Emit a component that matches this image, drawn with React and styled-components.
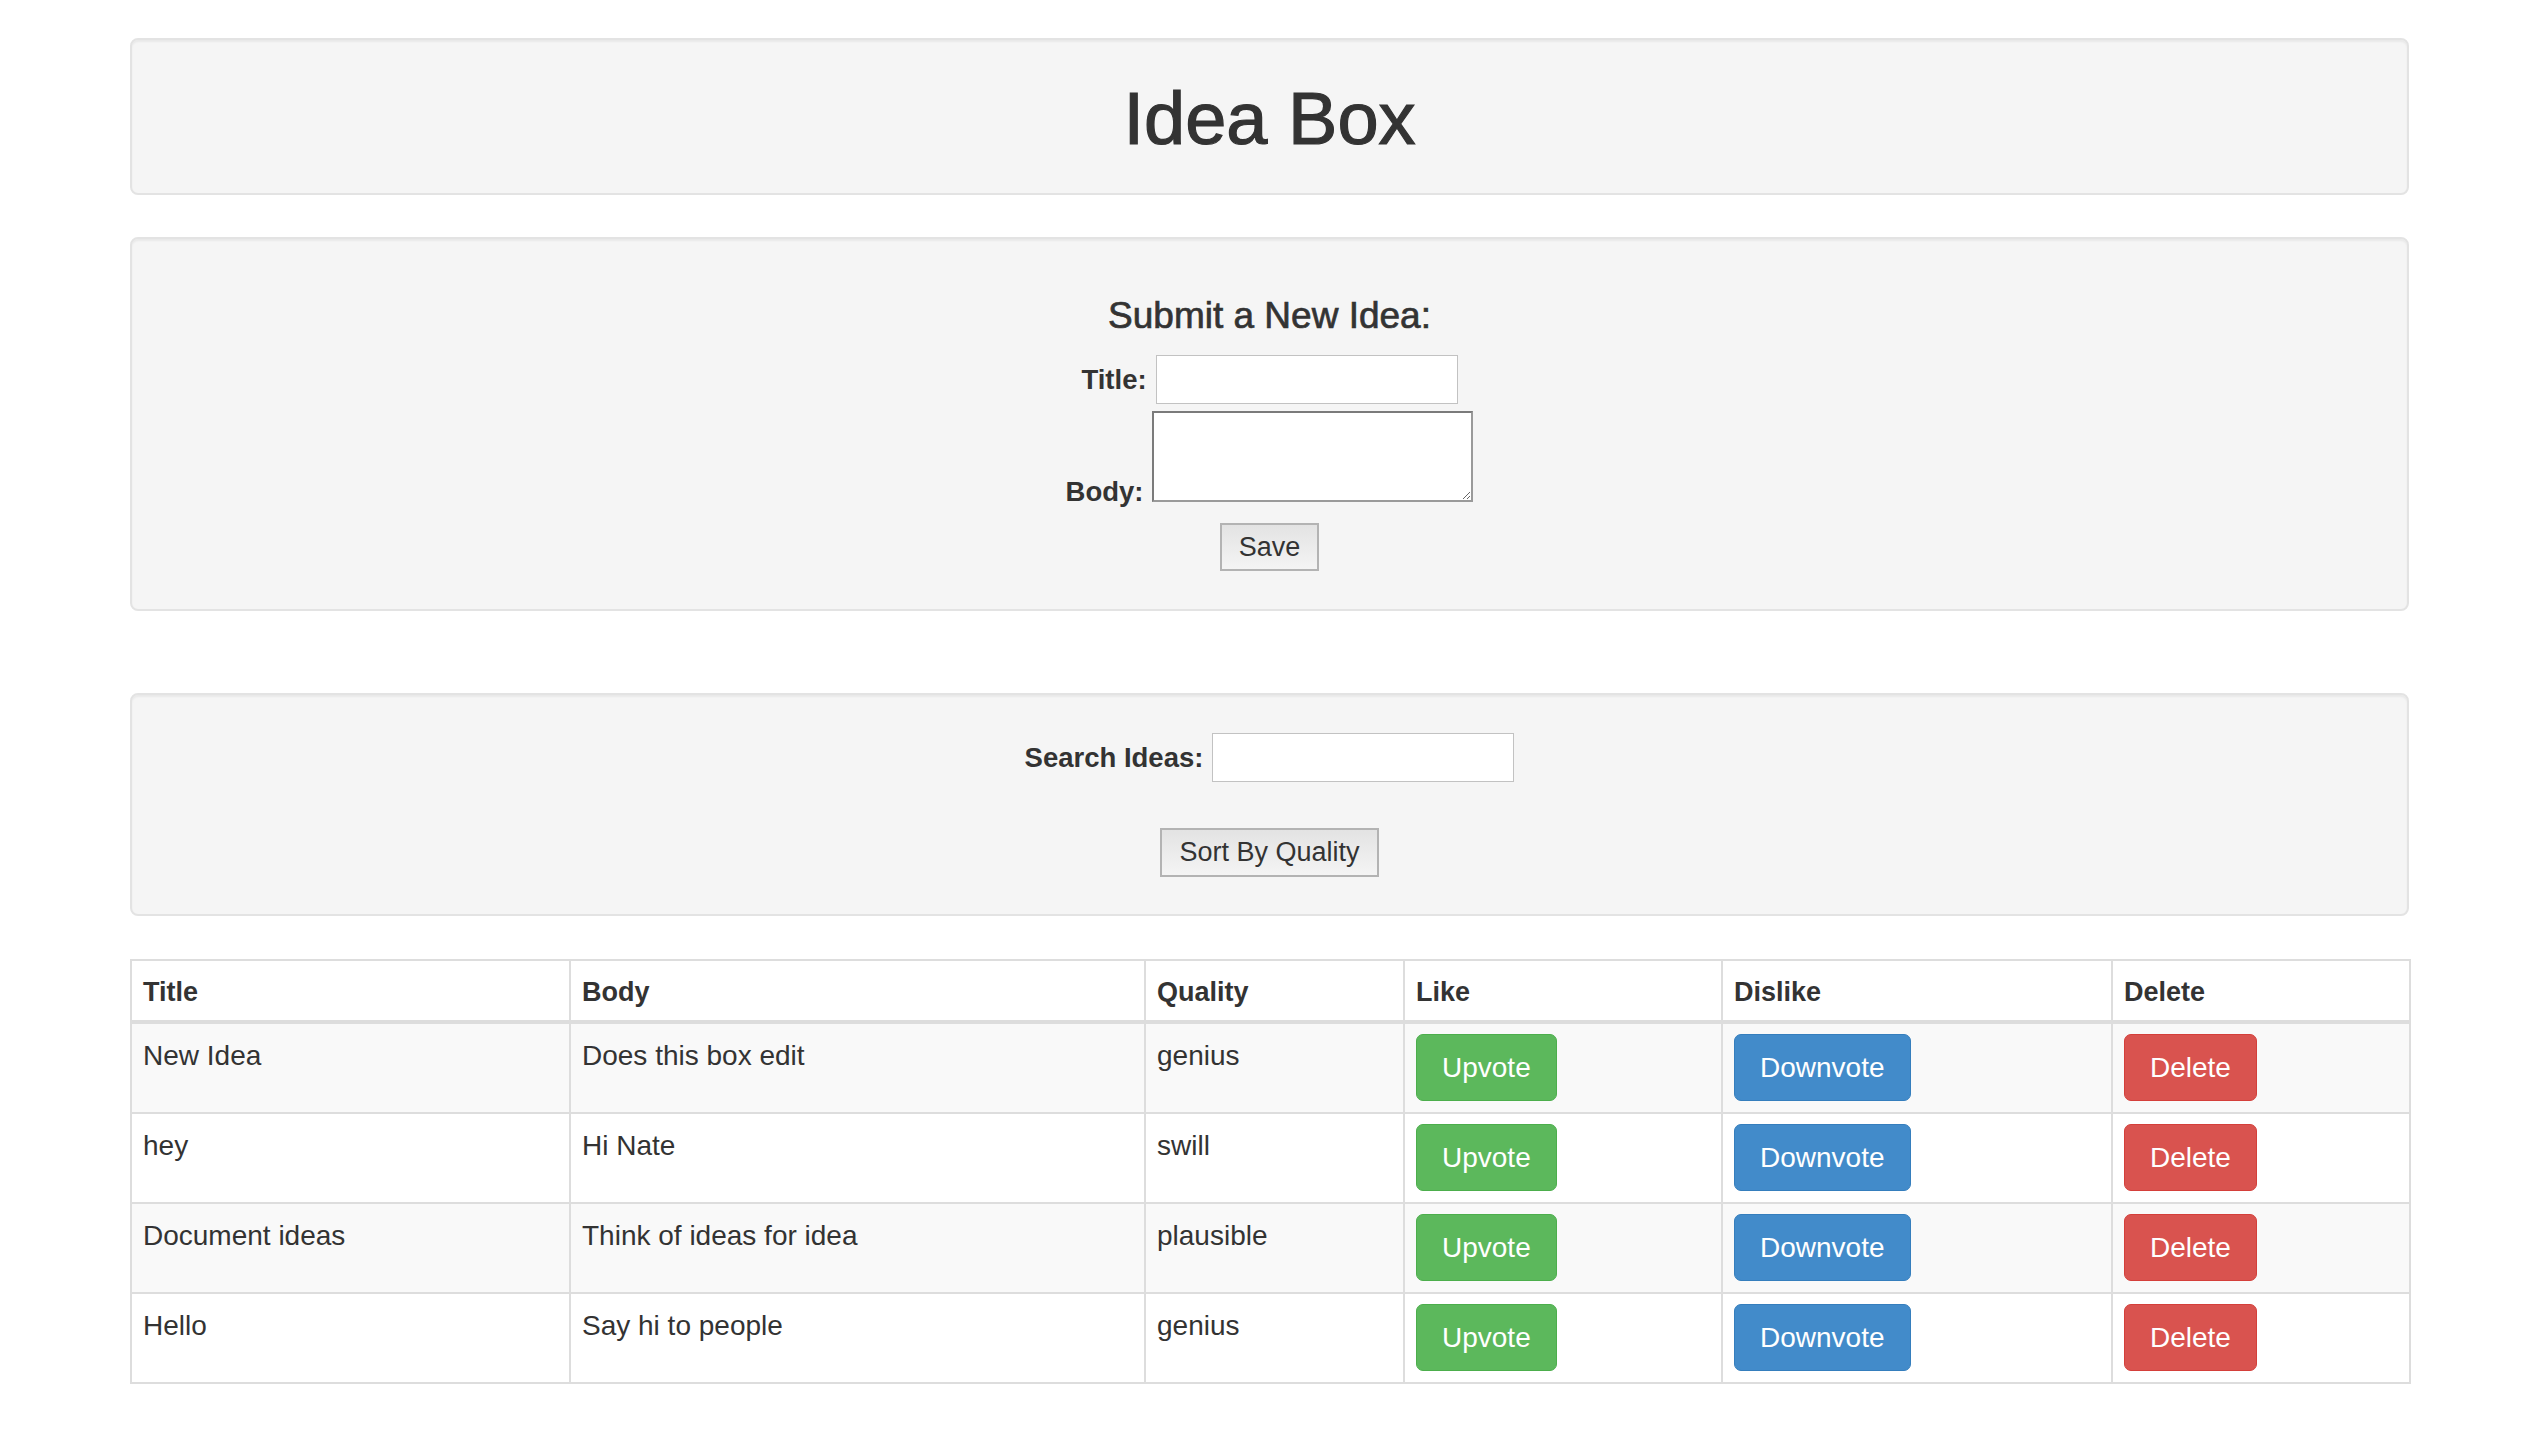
import React from "react";
import styled, { createGlobalStyle } from "styled-components";

const ideas = [
    { title: "New Idea", body: "Does this box edit", quality: "genius" },
    { title: "hey", body: "Hi Nate", quality: "swill" },
    { title: "Document ideas", body: "Think of ideas for idea", quality: "plausible" },
    { title: "Hello", body: "Say hi to people", quality: "genius" },
];

const columns = [
    { label: "Title", width: 439 },
    { label: "Body", width: 575 },
    { label: "Quality", width: 259 },
    { label: "Like", width: 318 },
    { label: "Dislike", width: 390 },
    { label: "Delete", width: 298 },
];

function App() {
    return (
        <>
            <GlobalStyle />
            <Page>
                <Well pad="39px 0 35px">
                    <PageTitle>Idea Box</PageTitle>
                </Well>

                <Well pad="56px 0 38px" gap="42px">
                    <FormTitle>Submit a New Idea:</FormTitle>
                    <FieldRow top="19px">
                        <Label>Title:</Label>
                        <TextInput type="text" />
                    </FieldRow>
                    <FieldRow top="7px" align="flex-end">
                        <Label drop="-4px">Body:</Label>
                        <BodyArea />
                    </FieldRow>
                    <FieldRow top="21px">
                        <PlainButton h="48px">Save</PlainButton>
                    </FieldRow>
                </Well>

                <Well pad="38px 0 37px" gap="82px">
                    <FieldRow>
                        <Label>Search Ideas:</Label>
                        <TextInput type="text" />
                    </FieldRow>
                    <FieldRow top="46px">
                        <PlainButton h="49px">Sort By Quality</PlainButton>
                    </FieldRow>
                </Well>

                <IdeaTable>
                    <colgroup>
                        {columns.map((c) => (
                            <col key={c.label} style={{ width: c.width }} />
                        ))}
                    </colgroup>
                    <thead>
                        <tr>
                            {columns.map((c) => (
                                <Th key={c.label}>{c.label}</Th>
                            ))}
                        </tr>
                    </thead>
                    <tbody>
                        {ideas.map((idea, i) => (
                            <Row key={i} striped={i % 2 === 0}>
                                <Td>{idea.title}</Td>
                                <Td>{idea.body}</Td>
                                <Td>{idea.quality}</Td>
                                <Td><VoteButton kind="up">Upvote</VoteButton></Td>
                                <Td><VoteButton kind="down">Downvote</VoteButton></Td>
                                <Td><VoteButton kind="delete">Delete</VoteButton></Td>
                            </Row>
                        ))}
                    </tbody>
                </IdeaTable>
            </Page>
        </>
    );
}

const GlobalStyle = createGlobalStyle`
body {
    margin: 0;
    background: #fff;
    color: #333;
    font-family: "Liberation Sans", Arial, sans-serif;
}
`;

const Page = styled.div`
padding: 38px 125px 60px 130px;
box-sizing: border-box;
width: 2534px;
`;

const Well = styled.div`
margin-top: ${(p) => p.gap || "0"};
padding: ${(p) => p.pad};
background: #f5f5f5;
border: 2px solid #e3e3e3;
border-radius: 8px;
box-shadow: inset 0 2px 2px rgba(0, 0, 0, 0.05);
display: flex;
flex-direction: column;
align-items: center;
`;

const PageTitle = styled.h1`
margin: 0;
font-size: 74px;
line-height: 79px;
font-weight: 400;
-webkit-text-stroke: 1.2px #333;
color: #333;
`;

const FormTitle = styled.h3`
margin: 0;
font-size: 37px;
line-height: 41px;
font-weight: 400;
-webkit-text-stroke: 0.7px #333;
color: #333;
`;

const FieldRow = styled.div`
margin-top: ${(p) => p.top || "0"};
display: flex;
justify-content: center;
align-items: ${(p) => p.align || "center"};
gap: 9px;
`;

const Label = styled.label`
font-size: 27.5px;
font-weight: 700;
line-height: ${(p) => (p.drop ? "28px" : "normal")};
margin-bottom: ${(p) => p.drop || "0"};
color: #333;
`;

const TextInput = styled.input`
box-sizing: border-box;
width: 302px;
height: 49px;
margin: 0;
border: 1px solid #c2c2c2;
background: #fff;
font-size: 24px;
outline: none;
`;

const BodyArea = styled.textarea`
box-sizing: border-box;
width: 321px;
height: 91px;
margin: 0;
border: 2px solid;
border-color: #7b7b7b #9a9a9a #9a9a9a #7b7b7b;
background: #fff;
font-size: 24px;
outline: none;
`;

const PlainButton = styled.button`
box-sizing: border-box;
height: ${(p) => p.h};
padding: 0 17px;
border: 2px solid #b3b3b3;
border-radius: 0;
background: linear-gradient(to bottom, #e3e3e3, #f4f4f4);
font-family: "Liberation Sans", Arial, sans-serif;
font-size: 27px;
color: #333;
`;

const IdeaTable = styled.table`
width: 2279px;
table-layout: fixed;
border-collapse: collapse;
border: 2px solid #ddd;
margin-top: 43px;
font-size: 28px;
color: #333;
`;

const Th = styled.th`
padding: 12px 11px 8px;
line-height: 39px;
text-align: left;
font-weight: 700;
font-size: 27px;
border: 2px solid #ddd;
border-bottom-width: 4px;
`;

const Row = styled.tr`
background: ${(p) => (p.striped ? "#f9f9f9" : "#fff")};
`;

const Td = styled.td`
padding: 10px 11px 11px;
line-height: 43px;
vertical-align: top;
border: 2px solid #ddd;
white-space: nowrap;
`;

const buttonColors = {
    up: { bg: "#5cb85c", border: "#4cae4c" },
    down: { bg: "#428bca", border: "#357ebd" },
    delete: { bg: "#d9534f", border: "#d43f3a" },
};

const VoteButton = styled.button`
display: inline-block;
vertical-align: top;
box-sizing: border-box;
height: 67px;
padding: 0 25px;
border: 1px solid ${(p) => buttonColors[p.kind].border};
border-radius: 7px;
background: ${(p) => buttonColors[p.kind].bg};
color: #fff;
font-family: "Liberation Sans", Arial, sans-serif;
font-size: 28px;
line-height: 1;
`;

export default App;
